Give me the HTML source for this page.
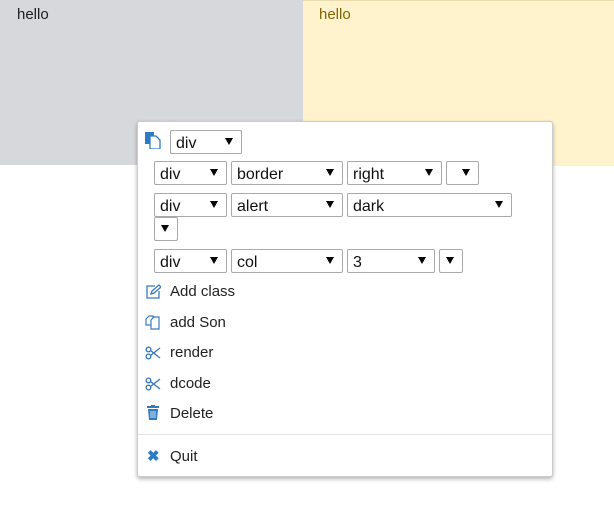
<!DOCTYPE html>
<html><head><style>
body{margin:0;width:614px;height:517px;background:#fff;position:relative;font-family:"Liberation Sans",sans-serif;overflow:hidden}
.a{position:absolute}
.s{position:absolute;box-sizing:border-box;border:1px solid #a9a9a9;border-radius:2px;background:#fff;height:24px;font-size:16px;line-height:22px;padding-top:2px;padding-left:5px;color:#111}
.s:after{content:"";position:absolute;right:8px;top:7px;border-left:4px solid transparent;border-right:4px solid transparent;border-top:7px solid #000}
.it{position:absolute;left:170px;font-size:15px;color:#222}
.ic{position:absolute;left:145px}
</style></head><body>
<div class="a" style="left:0;top:0;width:303px;height:165px;background:#d6d8db"></div>
<div class="a" style="left:303px;top:0;width:311px;height:165px;background:#fff3cd;border-top:1px solid #e8dcb0"></div>
<div class="a" style="left:17px;top:6px;font-size:15px;color:#1b1e21">hello</div>
<div class="a" style="left:319px;top:6px;font-size:15px;color:#856404">hello</div>
<div class="a" style="left:137px;top:121px;width:414px;height:354px;background:#fff;border:1px solid #ccc;border-radius:3px;box-shadow:0 2px 4px rgba(0,0,0,.3)"></div>
<svg class="a" style="left:145px;top:132px" width="16" height="17" viewBox="0 0 16 17"><rect x="0" y="0" width="9" height="12" fill="#2e7bc4"/><path d="M5 4h6l4 4v9H5z" fill="#fff" stroke="#2e7bc4" stroke-width="1.3"/></svg>
<div class="s" style="left:170px;top:130px;width:72px">div</div>
<div class="s" style="left:154px;top:161px;width:73px">div</div>
<div class="s" style="left:231px;top:161px;width:112px">border</div>
<div class="s" style="left:347px;top:161px;width:95px">right</div>
<div class="s" style="left:446px;top:161px;width:33px"></div>
<div class="s" style="left:154px;top:193px;width:73px">div</div>
<div class="s" style="left:231px;top:193px;width:112px">alert</div>
<div class="s" style="left:347px;top:193px;width:165px">dark</div>
<div class="s" style="left:154px;top:217px;width:24px"></div>
<div class="s" style="left:154px;top:249px;width:73px">div</div>
<div class="s" style="left:231px;top:249px;width:112px">col</div>
<div class="s" style="left:347px;top:249px;width:88px">3</div>
<div class="s" style="left:439px;top:249px;width:24px"></div>
<svg class="ic" style="top:284px" width="16" height="16" viewBox="0 0 16 16" fill="none" stroke="#3b7bbf" stroke-width="1.3"><path d="M10 2H2v12h12V7"/><path d="M6 10l1-3 7-6 2 2-7 6z"/></svg>
<div class="it" style="top:283px">Add class</div>
<svg class="ic" style="top:314px" width="16" height="16" viewBox="0 0 16 16" fill="none" stroke="#3b7bbf" stroke-width="1.2"><path d="M1 5l3-3h4v9H1z"/><path d="M6 6l3-3h5v12H6z" fill="#fff"/></svg>
<div class="it" style="top:314px">add Son</div>
<div class="it" style="top:344px">render</div>
<div class="it" style="top:375px">dcode</div>
<svg class="ic" style="top:346px" width="16" height="14" viewBox="0 0 16 14" fill="none" stroke="#3b7bbf" stroke-width="1.4"><circle cx="3.5" cy="3.5" r="2.3"/><circle cx="3.5" cy="10.5" r="2.3"/><path d="M5.5 4.5L15 12M5.5 9.5L15 2"/></svg>
<svg class="ic" style="top:377px" width="16" height="14" viewBox="0 0 16 14" fill="none" stroke="#3b7bbf" stroke-width="1.4"><circle cx="3.5" cy="3.5" r="2.3"/><circle cx="3.5" cy="10.5" r="2.3"/><path d="M5.5 4.5L15 12M5.5 9.5L15 2"/></svg>
<svg class="ic" style="top:405px;left:147px" width="12" height="15" viewBox="0 0 12 15"><rect x="0" y="1" width="12" height="2" fill="#2e7bc4"/><rect x="4" y="0" width="4" height="2" fill="#2e7bc4"/><path d="M1 4h10l-1 11H2z" fill="#2e7bc4"/><path d="M4 6v7M6 6v7M8 6v7" stroke="#fff" stroke-width=".8"/></svg>
<div class="it" style="top:405px">Delete</div>
<div class="a" style="left:138px;top:434px;width:414px;height:1px;background:#e2e2e2"></div>
<div class="ic" style="top:447px;left:147px;color:#2e7bc4;font-size:15px;font-weight:bold">✖</div>
<div class="it" style="top:448px">Quit</div>
</body></html>
